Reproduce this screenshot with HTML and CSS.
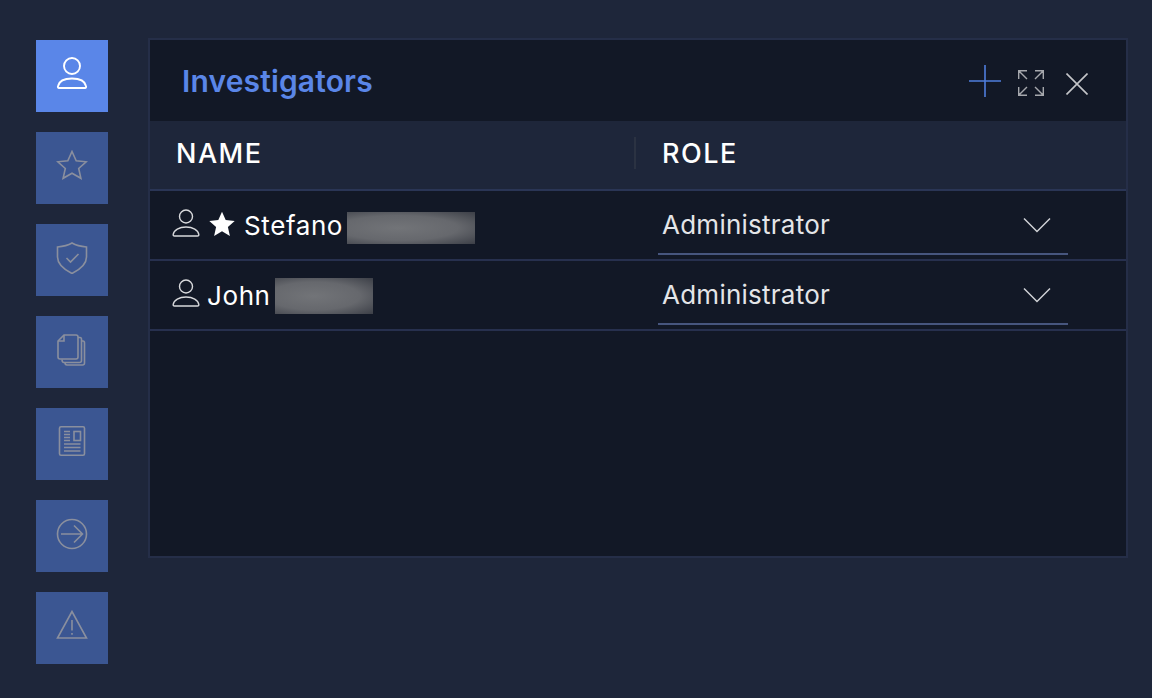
FILE: index.html
```html
<!DOCTYPE html>
<html lang="en">
<head>
    <meta charset="UTF-8">
    <meta name="viewport" content="width=device-width, initial-scale=1.0">
    <title>Investigators</title>
    <link rel="stylesheet" href="styles.css">
</head>
<body>
    <div class="page">
        <nav class="sidebar">
            <a class="side-btn active">
                <svg class="side-icon" viewBox="0 0 32 32"><circle cx="16" cy="9" r="8"/><path d="M3 31c-1 0-1.300-1-1-2 1-4.500 6-7.500 14-7.500s13 3 14 7.500c.3 1 0 2-1 2z"/></svg>
            </a>
            <a class="side-btn">
                <svg class="side-icon" viewBox="0 0 32 32"><path d="M16 1.500l4.200 9.300 10 1-7.500 6.700 2.200 9.800-8.900-5.100-8.900 5.100 2.200-9.800-7.500-6.700 10-1z"/></svg>
            </a>
            <a class="side-btn">
                <svg class="side-icon" viewBox="0 0 32 32"><path d="M16 1c4 2.300 9 3.500 14.500 4v10c0 6.500-5.500 12-14.500 16.500C7 27 1.500 21.500 1.500 15V5C7 4.500 12 3.300 16 1z"/><path d="M10.500 16l4 4 8-8"/></svg>
            </a>
            <a class="side-btn">
                <svg class="side-icon" viewBox="0 0 32 32"><path d="M8 1h12c1 0 2 1 2 2v20c0 1-1 2-2 2H4c-1 0-2-1-2-2V7z"/><path d="M8 1v6H2"/><path d="M22 3.500h2c1 0 1.500 1 1.500 2v21c0 1-1 2-2 2H8c-1 0-2-1-2-3"/><path d="M25.500 7h1.500c1 0 1.500 1 1.500 2v20c0 1-1 2-2 2H11c-1 0-2-1-2-2.500"/></svg>
            </a>
            <a class="side-btn">
                <svg class="side-icon" viewBox="0 0 32 32"><rect x="3.500" y=".8" width="25" height="28.500" rx="1.500"/><rect x="18" y="5.500" width="6.500" height="9"/><path d="M8 5.500h6M8 8.500h6M8 11.500h6M8 14.500h6M8 18h16.500M8 21.500h16.500M8 25h16.500"/></svg>
            </a>
            <a class="side-btn">
                <svg class="side-icon" viewBox="0 0 32 32"><circle cx="16" cy="16" r="14.500"/><path d="M5 16h21M18 7.500l8.500 8.500-8.500 8.500"/></svg>
            </a>
            <a class="side-btn">
                <svg class="side-icon" viewBox="0 0 32 32"><path d="M16 1.500L1.500 28h29z"/><path d="M16 10v10.500M16 23v1.800"/></svg>
            </a>
        </nav>

        <section class="panel">
            <header class="panel-head">
                <h1>Investigators</h1>
                <div class="panel-tools">
                    <svg class="tool-plus" viewBox="0 0 32 32"><path d="M16 0v32M0 16h32"/></svg>
                    <svg class="tool-expand" viewBox="0 0 26 26"><path d="M.7 9V.7H9M.7.700l8.300 8.300M17 .7h8.300V9M25.300.700L17 9M.7 17v8.300H9M.7 25.300L9 17M25.300 17v8.300H17M25.300 25.300L17 17"/></svg>
                    <svg class="tool-close" viewBox="0 0 22 22"><path d="M.5.500l21 21M21.500.500l-21 21"/></svg>
                </div>
            </header>

            <div class="col-head">
                <div class="col-name">NAME</div>
                <div class="col-role">ROLE</div>
            </div>

            <div class="row">
                <div class="col-name">
                    <svg class="user-icon" viewBox="0 0 28 28"><circle cx="14" cy="7.500" r="6.500"/><path d="M2.500 27c-1 0-1.500-.7-1.300-1.700C2 21 7 18 14 18s12 3 12.800 7.300c.2 1-.3 1.700-1.300 1.700z"/></svg>
                    <svg class="star-icon" viewBox="0 0 26 26"><path d="M13 .8l3.700 8.300 9 .9-6.800 6 2 8.900-7.900-4.600-7.900 4.600 2-8.900-6.800-6 9-.9z"/></svg>
                    <span class="person">Stefano</span>
                    <span class="redact redact-long"></span>
                </div>
                <div class="col-role">
                    <div class="role-select">
                        <span>Administrator</span>
                        <svg class="chevron" viewBox="0 0 28 16"><path d="M1 1.500l13 13 13-13"/></svg>
                    </div>
                </div>
            </div>

            <div class="row">
                <div class="col-name">
                    <svg class="user-icon" viewBox="0 0 28 28"><circle cx="14" cy="7.500" r="6.500"/><path d="M2.500 27c-1 0-1.500-.7-1.300-1.700C2 21 7 18 14 18s12 3 12.800 7.300c.2 1-.3 1.700-1.300 1.700z"/></svg>
                    <span class="person">John</span>
                    <span class="redact redact-short"></span>
                </div>
                <div class="col-role">
                    <div class="role-select">
                        <span>Administrator</span>
                        <svg class="chevron" viewBox="0 0 28 16"><path d="M1 1.500l13 13 13-13"/></svg>
                    </div>
                </div>
            </div>
        </section>
    </div>
</body>
</html>
```

FILE: styles.css
```css
* {
    box-sizing: border-box;
}

body {
    margin: 0;
    background-color: #1e263a;
    font-family: 'Inter', 'Liberation Sans', sans-serif;
    color: #ffffff;
}

svg {
    display: block;
    fill: none;
}

.page {
    display: flex;
    align-items: flex-start;
    gap: 40px;
    height: 698px;
    padding: 38px 24px 0 36px;
    overflow: hidden;
}

.sidebar {
    display: flex;
    flex-direction: column;
    gap: 20px;
    flex: none;
    margin-top: 2px;
}

.side-btn {
    display: flex;
    align-items: center;
    justify-content: center;
    width: 72px;
    height: 72px;
    background-color: #3b5692;
    color: #8a8f9e;
}

.side-btn.active {
    background-color: #5a86e8;
    color: #ffffff;
}

.side-icon {
    width: 32px;
    height: 32px;
    margin-bottom: 4px;
    stroke: currentColor;
    stroke-width: 1.6;
}

.active .side-icon {
    margin-bottom: 6px;
    stroke-width: 1.9;
}

.panel {
    flex: 1;
    height: 520px;
    background-color: #121826;
    border: 2px solid #252e48;
}

.panel-head {
    display: flex;
    align-items: center;
    justify-content: space-between;
    height: 81px;
    padding: 0 38px 0 32px;
}

h1 {
    margin: 0;
    font-size: 30px;
    font-weight: 600;
    letter-spacing: 0.15px;
    color: #5a86e8;
}

.panel-tools {
    display: flex;
    align-items: center;
}

.tool-plus {
    width: 32px;
    height: 32px;
    stroke: #4f7ddd;
    stroke-width: 1.6;
}

.tool-expand {
    width: 26px;
    height: 26px;
    margin: 4px 0 0 17px;
    stroke: #a6a8ad;
    stroke-width: 1.4;
}

.tool-close {
    width: 22px;
    height: 22px;
    margin: 6px 0 0 22px;
    stroke: #c4c5c8;
    stroke-width: 1.6;
}

.col-head {
    display: flex;
    align-items: center;
    height: 70px;
    padding-bottom: 4px;
    background-color: #1e263a;
    border-bottom: 2px solid #2a3555;
    font-size: 27px;
    font-weight: 500;
    letter-spacing: 1.5px;
}

.col-head .col-name {
    position: relative;
    padding-left: 26px;
}

.col-head .col-name::after {
    content: "";
    position: absolute;
    right: -1px;
    top: 0;
    width: 2px;
    height: 32px;
    background-color: #2b3242;
}

.col-head .col-role {
    padding-left: 27px;
}

.col-name {
    display: flex;
    align-items: center;
    width: 485px;
    flex: none;
}

.col-role {
    flex: 1;
}

.row {
    display: flex;
    align-items: center;
    height: 70px;
    border-bottom: 2px solid #27304e;
    font-size: 26px;
}

.row .col-name {
    padding-left: 22px;
}

.user-icon {
    width: 28px;
    height: 28px;
    margin-top: -5px;
    stroke: #d8d9dc;
    stroke-width: 1.4;
}

.star-icon {
    width: 26px;
    height: 26px;
    margin: -2px 0 0 9px;
    fill: #ffffff;
}

.person {
    margin-left: 7px;
    letter-spacing: 0.6px;
}

.star-icon + .person {
    margin-left: 9px;
}

.redact {
    height: 32px;
    background: radial-gradient(ellipse at 40% 50%, #727478 0%, #66686d 55%, #3c3f47 100%);
}

.redact-long {
    width: 128px;
    margin: 6px 0 0 4px;
}

.redact-short {
    width: 98px;
    height: 36px;
    margin: 2px 0 0 4px;
}

.role-select {
    display: flex;
    align-items: center;
    justify-content: space-between;
    width: 410px;
    height: 60px;
    margin-left: 23px;
    padding: 0 17px 0 4px;
    border-bottom: 2px solid #47567e;
    color: #e4e5e8;
    letter-spacing: 0.25px;
}

.chevron {
    width: 28px;
    height: 16px;
    margin-top: 2px;
    stroke: #d0d2d6;
    stroke-width: 1.5;
}
```
